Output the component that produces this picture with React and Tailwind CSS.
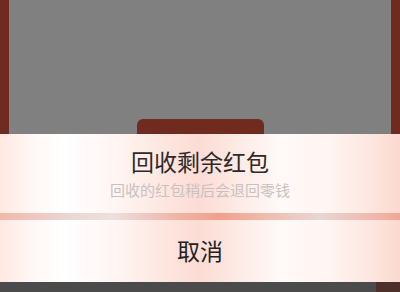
import React from "react";

export default function App() {
  return (
    <div
      className="w-[400px] h-[292px] overflow-hidden flex flex-col bg-[#4b4b4b]"
      style={{ fontFamily: '"Noto Sans CJK SC", "Noto Sans", sans-serif' }}
    >
      {/* dimmed page behind the sheet */}
      <div className="h-[134px] flex bg-[#6f2b1f]">
        <div className="w-[9px]" />
        <div className="flex-1 bg-[#808080] flex flex-col justify-end items-center border-l border-[#8a7f7c]">
          <div className="w-[127px] h-[15px] bg-[#6e2b1e] rounded-t-[6px]" />
        </div>
        <div className="w-[9px]" />
      </div>

      {/* action sheet */}
      <div className="h-[148px] flex flex-col bg-[linear-gradient(90deg,#ffe8e2_0%,#fff7f5_8%,#ffffff_16%,#fff4f1_30%,#fde5de_42%,#fcdcd4_50%,#fde8e2_58%,#fff9f8_70%,#fff5f2_82%,#fde4dc_94%,#fbd9cf_100%)]">
        <div className="h-[79px] flex flex-col items-center pt-[12px]">
          <div className="text-[23px] leading-[30px] text-[#2e2a2a]">回收剩余红包</div>
          <div className="text-[15px] leading-[20px] mt-[4px] text-[#c9c1c0]">回收的红包稍后会退回零钱</div>
        </div>
        <div className="h-[7px] bg-[linear-gradient(90deg,#f2b8aa_0%,#ead8d4_18%,#ede0dd_28%,#f0b3a3_45%,#f2a08c_55%,#efc3b8_70%,#e8d6d2_80%,#f2b4a6_95%,#f0a696_100%)]" />
        <div className="flex-1 flex items-center justify-center">
          <div className="text-[23px] leading-[30px] text-[#222] mb-[2px]">取消</div>
        </div>
      </div>

      {/* bottom strip */}
      <div className="flex-1 flex justify-end">
        <div className="w-[24px] bg-[#4e302a]" />
      </div>
    </div>
  );
}
